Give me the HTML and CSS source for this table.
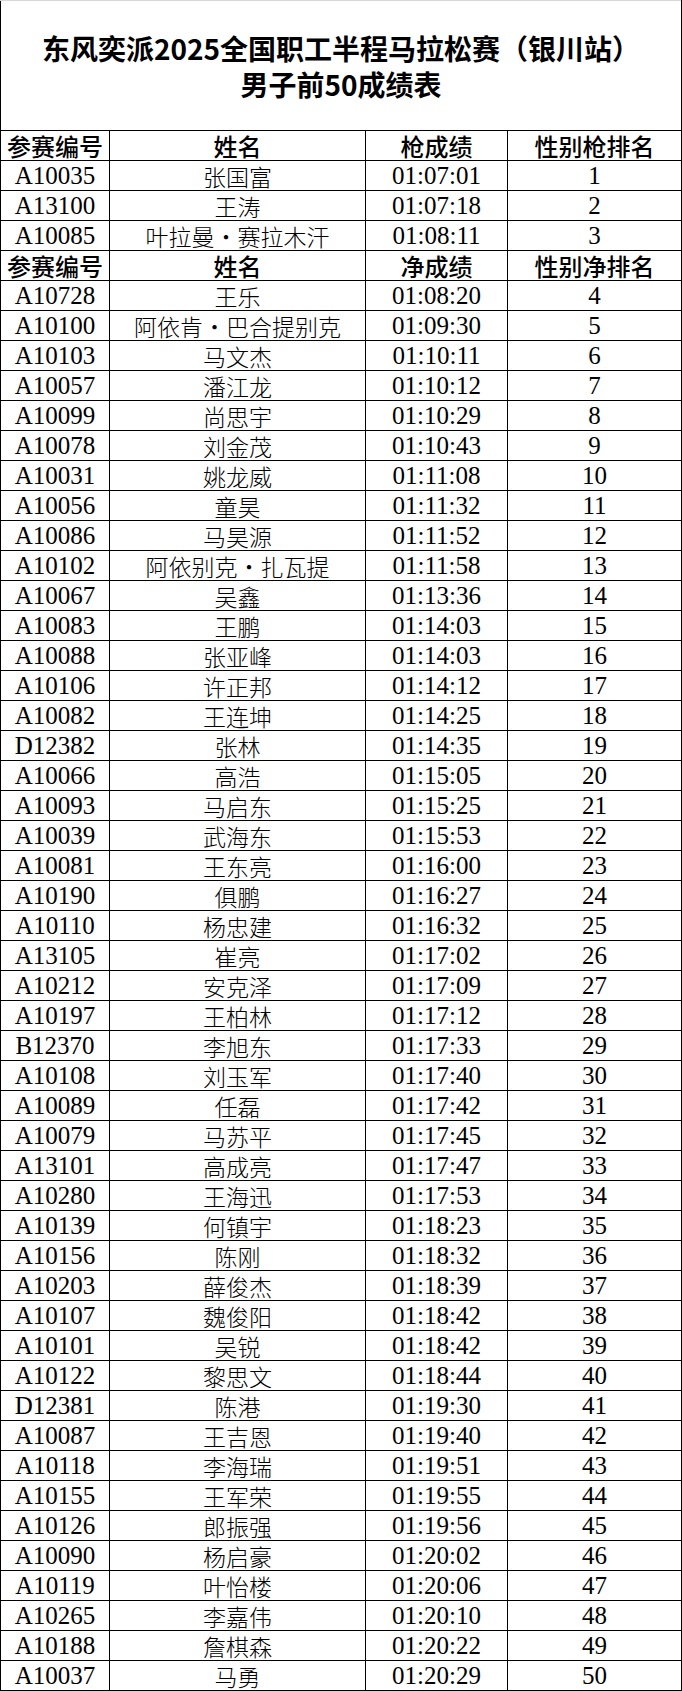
FILE: index.html
```html
<!DOCTYPE html>
<html lang="zh-CN">
<head>
<meta charset="utf-8">
<title>男子前50成绩表</title>
<link rel="stylesheet" href="styles.css">
</head>
<body>
<table class="results">
  <colgroup>
    <col class="c-id"><col class="c-name"><col class="c-time"><col class="c-rank">
  </colgroup>
  <tbody>
    <tr class="title-row"><td colspan="4" class="title">东风奕派2025全国职工半程马拉松赛（银川站）<br>男子前50成绩表</td></tr>
    <tr class="hd"><td>参赛编号</td><td>姓名</td><td>枪成绩</td><td>性别枪排名</td></tr>
    <tr><td class="num">A10035</td><td class="nm">张国富</td><td class="num">01:07:01</td><td class="num">1</td></tr>
    <tr><td class="num">A13100</td><td class="nm">王涛</td><td class="num">01:07:18</td><td class="num">2</td></tr>
    <tr><td class="num">A10085</td><td class="nm">叶拉曼・赛拉木汗</td><td class="num">01:08:11</td><td class="num">3</td></tr>
    <tr class="hd"><td>参赛编号</td><td>姓名</td><td>净成绩</td><td>性别净排名</td></tr>
    <tr><td class="num">A10728</td><td class="nm">王乐</td><td class="num">01:08:20</td><td class="num">4</td></tr>
    <tr><td class="num">A10100</td><td class="nm">阿依肯・巴合提别克</td><td class="num">01:09:30</td><td class="num">5</td></tr>
    <tr><td class="num">A10103</td><td class="nm">马文杰</td><td class="num">01:10:11</td><td class="num">6</td></tr>
    <tr><td class="num">A10057</td><td class="nm">潘江龙</td><td class="num">01:10:12</td><td class="num">7</td></tr>
    <tr><td class="num">A10099</td><td class="nm">尚思宇</td><td class="num">01:10:29</td><td class="num">8</td></tr>
    <tr><td class="num">A10078</td><td class="nm">刘金茂</td><td class="num">01:10:43</td><td class="num">9</td></tr>
    <tr><td class="num">A10031</td><td class="nm">姚龙威</td><td class="num">01:11:08</td><td class="num">10</td></tr>
    <tr><td class="num">A10056</td><td class="nm">童昊</td><td class="num">01:11:32</td><td class="num">11</td></tr>
    <tr><td class="num">A10086</td><td class="nm">马昊源</td><td class="num">01:11:52</td><td class="num">12</td></tr>
    <tr><td class="num">A10102</td><td class="nm">阿依别克・扎瓦提</td><td class="num">01:11:58</td><td class="num">13</td></tr>
    <tr><td class="num">A10067</td><td class="nm">吴鑫</td><td class="num">01:13:36</td><td class="num">14</td></tr>
    <tr><td class="num">A10083</td><td class="nm">王鹏</td><td class="num">01:14:03</td><td class="num">15</td></tr>
    <tr><td class="num">A10088</td><td class="nm">张亚峰</td><td class="num">01:14:03</td><td class="num">16</td></tr>
    <tr><td class="num">A10106</td><td class="nm">许正邦</td><td class="num">01:14:12</td><td class="num">17</td></tr>
    <tr><td class="num">A10082</td><td class="nm">王连坤</td><td class="num">01:14:25</td><td class="num">18</td></tr>
    <tr><td class="num">D12382</td><td class="nm">张林</td><td class="num">01:14:35</td><td class="num">19</td></tr>
    <tr><td class="num">A10066</td><td class="nm">高浩</td><td class="num">01:15:05</td><td class="num">20</td></tr>
    <tr><td class="num">A10093</td><td class="nm">马启东</td><td class="num">01:15:25</td><td class="num">21</td></tr>
    <tr><td class="num">A10039</td><td class="nm">武海东</td><td class="num">01:15:53</td><td class="num">22</td></tr>
    <tr><td class="num">A10081</td><td class="nm">王东亮</td><td class="num">01:16:00</td><td class="num">23</td></tr>
    <tr><td class="num">A10190</td><td class="nm">俱鹏</td><td class="num">01:16:27</td><td class="num">24</td></tr>
    <tr><td class="num">A10110</td><td class="nm">杨忠建</td><td class="num">01:16:32</td><td class="num">25</td></tr>
    <tr><td class="num">A13105</td><td class="nm">崔亮</td><td class="num">01:17:02</td><td class="num">26</td></tr>
    <tr><td class="num">A10212</td><td class="nm">安克泽</td><td class="num">01:17:09</td><td class="num">27</td></tr>
    <tr><td class="num">A10197</td><td class="nm">王柏林</td><td class="num">01:17:12</td><td class="num">28</td></tr>
    <tr><td class="num">B12370</td><td class="nm">李旭东</td><td class="num">01:17:33</td><td class="num">29</td></tr>
    <tr><td class="num">A10108</td><td class="nm">刘玉军</td><td class="num">01:17:40</td><td class="num">30</td></tr>
    <tr><td class="num">A10089</td><td class="nm">任磊</td><td class="num">01:17:42</td><td class="num">31</td></tr>
    <tr><td class="num">A10079</td><td class="nm">马苏平</td><td class="num">01:17:45</td><td class="num">32</td></tr>
    <tr><td class="num">A13101</td><td class="nm">高成亮</td><td class="num">01:17:47</td><td class="num">33</td></tr>
    <tr><td class="num">A10280</td><td class="nm">王海迅</td><td class="num">01:17:53</td><td class="num">34</td></tr>
    <tr><td class="num">A10139</td><td class="nm">何镇宇</td><td class="num">01:18:23</td><td class="num">35</td></tr>
    <tr><td class="num">A10156</td><td class="nm">陈刚</td><td class="num">01:18:32</td><td class="num">36</td></tr>
    <tr><td class="num">A10203</td><td class="nm">薛俊杰</td><td class="num">01:18:39</td><td class="num">37</td></tr>
    <tr><td class="num">A10107</td><td class="nm">魏俊阳</td><td class="num">01:18:42</td><td class="num">38</td></tr>
    <tr><td class="num">A10101</td><td class="nm">吴锐</td><td class="num">01:18:42</td><td class="num">39</td></tr>
    <tr><td class="num">A10122</td><td class="nm">黎思文</td><td class="num">01:18:44</td><td class="num">40</td></tr>
    <tr><td class="num">D12381</td><td class="nm">陈港</td><td class="num">01:19:30</td><td class="num">41</td></tr>
    <tr><td class="num">A10087</td><td class="nm">王吉恩</td><td class="num">01:19:40</td><td class="num">42</td></tr>
    <tr><td class="num">A10118</td><td class="nm">李海瑞</td><td class="num">01:19:51</td><td class="num">43</td></tr>
    <tr><td class="num">A10155</td><td class="nm">王军荣</td><td class="num">01:19:55</td><td class="num">44</td></tr>
    <tr><td class="num">A10126</td><td class="nm">郎振强</td><td class="num">01:19:56</td><td class="num">45</td></tr>
    <tr><td class="num">A10090</td><td class="nm">杨启豪</td><td class="num">01:20:02</td><td class="num">46</td></tr>
    <tr><td class="num">A10119</td><td class="nm">叶怡楼</td><td class="num">01:20:06</td><td class="num">47</td></tr>
    <tr><td class="num">A10265</td><td class="nm">李嘉伟</td><td class="num">01:20:10</td><td class="num">48</td></tr>
    <tr><td class="num">A10188</td><td class="nm">詹棋森</td><td class="num">01:20:22</td><td class="num">49</td></tr>
    <tr><td class="num">A10037</td><td class="nm">马勇</td><td class="num">01:20:29</td><td class="num">50</td></tr>
  </tbody>
</table>
</body>
</html>
```

FILE: styles.css
```css
html, body {
  margin: 0;
  padding: 0;
  background: #fff;
}

.results {
  border-collapse: collapse;
  table-layout: fixed;
  width: 681px;
  color: #000;
}

.c-id { width: 109px; }
.c-name { width: 256px; }
.c-time { width: 142px; }
.c-rank { width: 174px; }

.results td {
  border: 1px solid #000;
  padding: 0;
  height: 29px;
  text-align: center;
  vertical-align: middle;
  line-height: 26px;
  white-space: nowrap;
}

.results .title-row td {
  height: 129px;
  border-top: 1px solid #d8d8d8;
  font-family: "Noto Sans CJK SC", sans-serif;
  font-weight: 700;
  font-size: 28px;
  line-height: 36px;
}

.results .hd td {
  font-family: "Noto Sans CJK SC", sans-serif;
  font-weight: 500;
  font-size: 24px;
}

.results td.num {
  font-family: "Liberation Serif", serif;
  font-size: 25px;
}

.results td.nm {
  font-family: "Noto Sans CJK SC", sans-serif;
  font-weight: 300;
  font-size: 23px;
}
```
